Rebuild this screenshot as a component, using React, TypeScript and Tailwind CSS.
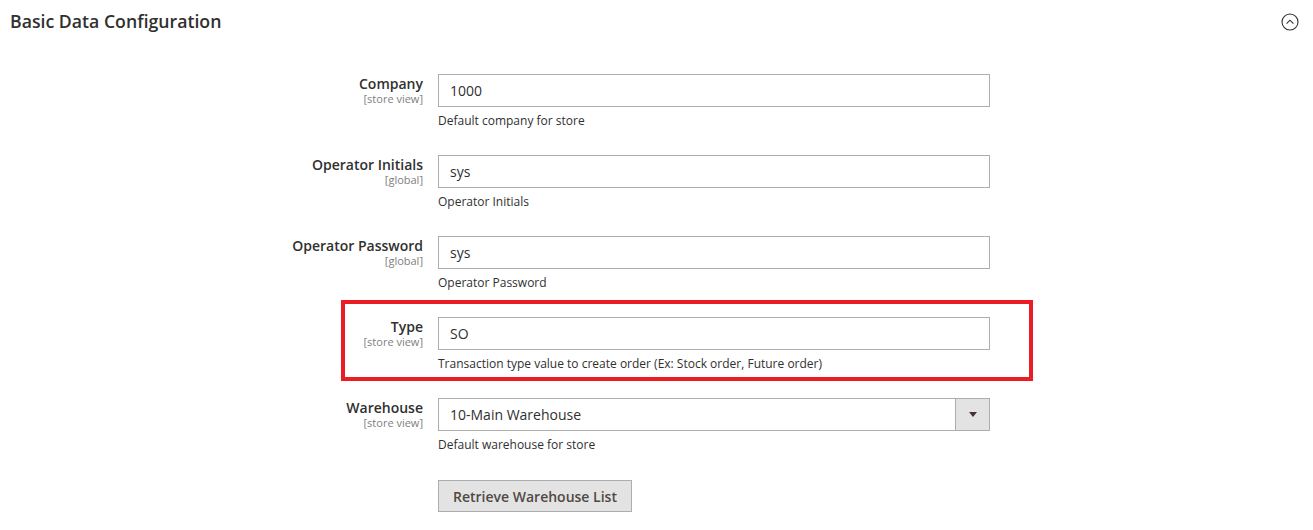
import React from 'react'

type Field = {
  label: string
  scope: string
  value: string
  note: string
  select?: boolean
  marked?: boolean
}

const fields: Field[] = [
  { label: 'Company', scope: '[store view]', value: '1000', note: 'Default company for store' },
  { label: 'Operator Initials', scope: '[global]', value: 'sys', note: 'Operator Initials' },
  { label: 'Operator Password', scope: '[global]', value: 'sys', note: 'Operator Password' },
  {
    label: 'Type',
    scope: '[store view]',
    value: 'SO',
    note: 'Transaction type value to create order (Ex: Stock order, Future order)',
    marked: true,
  },
  { label: 'Warehouse', scope: '[store view]', value: '10-Main Warehouse', note: 'Default warehouse for store', select: true },
]

const CollapseIcon = () => (
  <svg width="18" height="18" viewBox="0 0 18 18" fill="none">
    <circle cx="9" cy="9" r="8" stroke="#303030" strokeWidth="1.1" />
    <path d="M5.6 10.6 L9 7.2 L12.4 10.6" stroke="#303030" strokeWidth="1.1" />
  </svg>
)

const Control = ({ field }: { field: Field }) => {
  if (field.select) {
    return (
      <div className="flex h-[33px] w-[552px] border border-[#adadad] bg-white">
        <div className="flex-1 pl-[11px] text-[14px] leading-[31px] text-[#303030]">{field.value}</div>
        <div className="flex w-[34px] items-center justify-center border-l border-[#adadad] bg-[#e3e3e3]">
          <svg width="8" height="6" viewBox="0 0 8 6">
            <path d="M0 0 H8 L4 5 Z" fill="#41362f" />
          </svg>
        </div>
      </div>
    )
  }
  return (
    <div className="h-[33px] w-[552px] border border-[#adadad] bg-white pl-[11px] text-[14px] leading-[31px] text-[#303030]">
      {field.value}
    </div>
  )
}

const Row = ({ field, children }: { field: Field; children?: React.ReactNode }) => (
  <div className="relative flex">
    <div className="w-[423px] pt-[1px] text-right">
      <div className="text-[14px] font-semibold leading-[18px] text-[#303030]">{field.label}</div>
      <div className="text-[11px] leading-[12px] text-[#808080]">{field.scope}</div>
    </div>
    <div className="ml-[15px]">
      <Control field={field} />
      <div className="mt-[5px] text-[12px] leading-[18px] text-[#303030]">{field.note}</div>
      {children}
    </div>
    {field.marked && (
      <div className="absolute left-[341px] top-[-17px] h-[81px] w-[692px] border-4 border-[#ec1c24]" />
    )}
  </div>
)

export default function App() {
  return (
    <div className="h-[530px] w-[1313px] bg-white font-['Open_Sans',sans-serif]">
      <header className="flex h-[43px] items-center justify-between pl-[10px] pr-[14px]">
        <h2 className="text-[17.7px] font-semibold text-[#303030]">Basic Data Configuration</h2>
        <CollapseIcon />
      </header>
      <section className="flex flex-col gap-[25px] pt-[31px]">
        {fields.map((f) => (
          <Row key={f.label} field={f}>
            {f.select && (
              <button className="mt-[26px] h-[32px] border border-[#adadad] bg-[#e3e3e3] px-[14px] text-[14px] font-semibold text-[#514943]">
                Retrieve Warehouse List
              </button>
            )}
          </Row>
        ))}
      </section>
    </div>
  )
}
